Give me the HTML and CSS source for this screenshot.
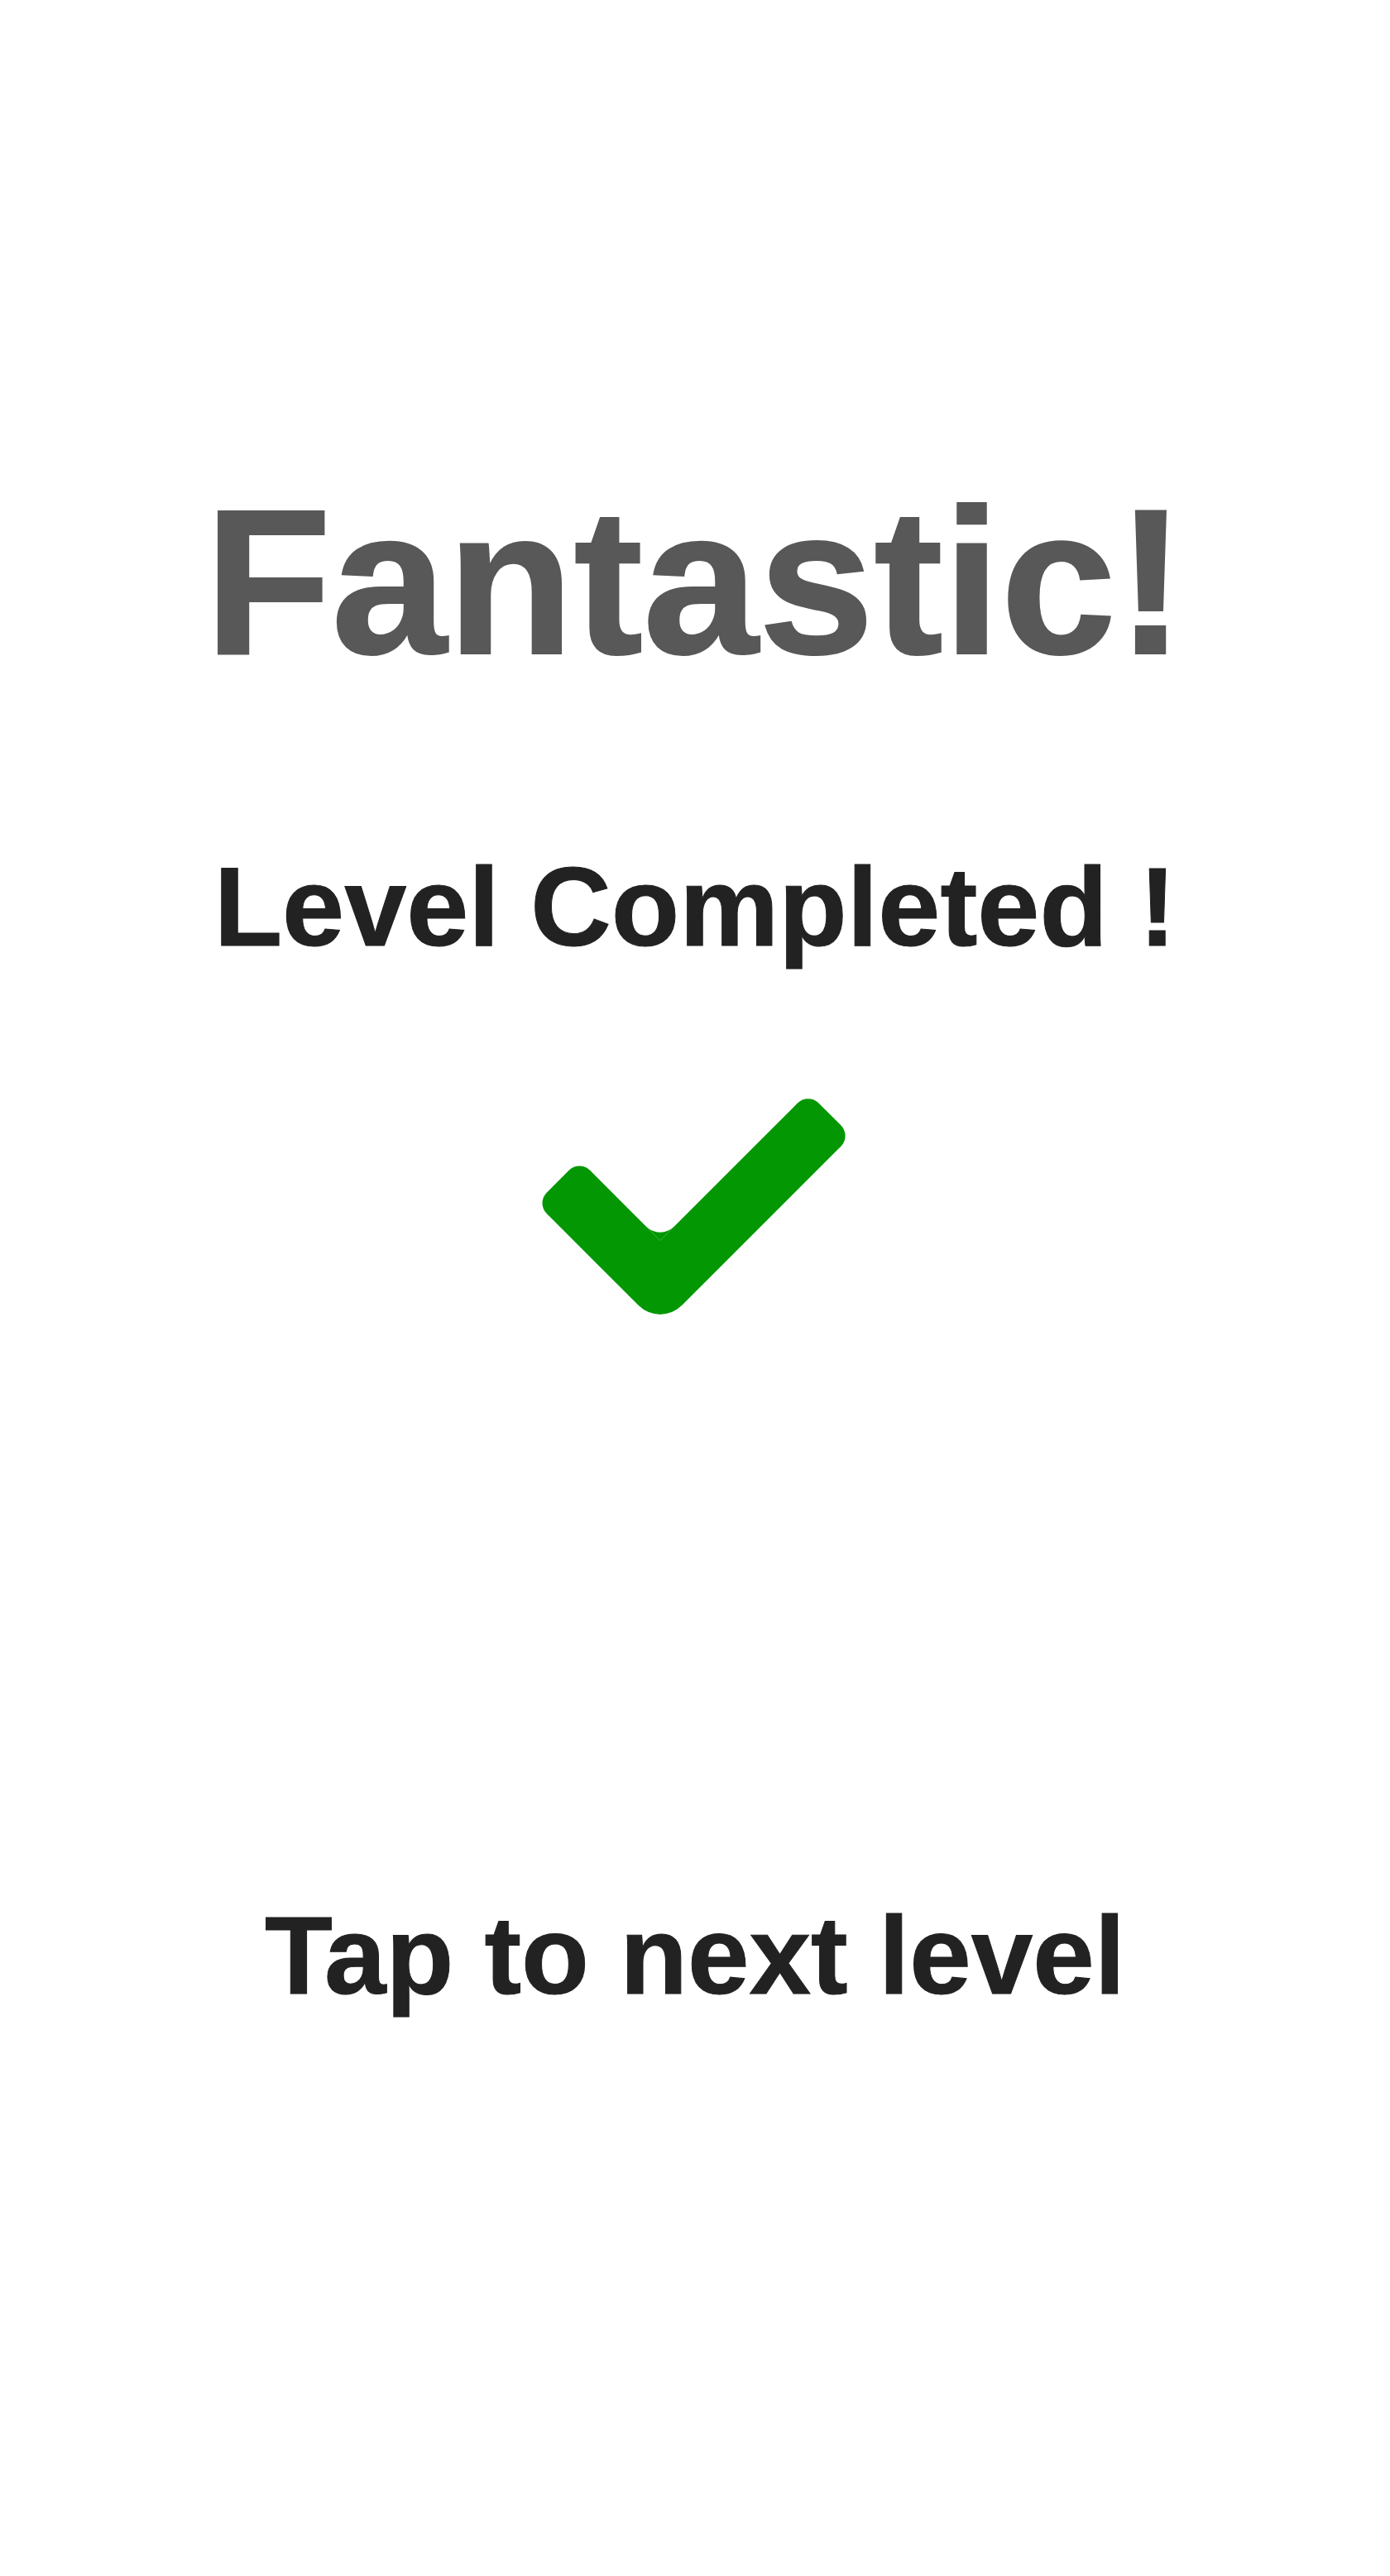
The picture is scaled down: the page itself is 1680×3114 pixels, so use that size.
FILE: index.html
```html
<!DOCTYPE html>
<html lang="en">
<head>
<meta charset="utf-8">
<title>Level Completed</title>
<link rel="stylesheet" href="styles.css">
</head>
<body>
<main class="screen">
  <h1 class="title">Fantastic!</h1>
  <h2 class="subtitle">Level Completed !</h2>
  <svg class="check" width="380" height="272" viewBox="0 0 380 272" aria-hidden="true">
    <path d="M36.93 121.93 L147.9 232.9 L340.17 40.63" fill="none" stroke="#039703" stroke-width="74" stroke-linejoin="round" stroke-linecap="butt"/>
    <g fill="#039703">
      <rect x="0" y="-37" width="36" height="74" rx="18" transform="translate(24.2,109.2) rotate(45)"/>
      <rect x="-36" y="-37" width="36" height="74" rx="18" transform="translate(352.9,27.9) rotate(-45)"/>
      <path d="M130.9 163.6 L147.9 180.6 L164.9 163.6 A24 24 0 0 1 130.9 163.6 Z"/>
    </g>
  </svg>
  <p class="tap">Tap to next level</p>
</main>
</body>
</html>
```

FILE: styles.css
```css
html, body {
  margin: 0;
  padding: 0;
  background: #ffffff;
}

.screen {
  display: flex;
  flex-direction: column;
  align-items: center;
  width: 1680px;
  min-height: 3114px;
  padding-top: 578px;
  box-sizing: border-box;
  font-family: "Liberation Sans", Arial, sans-serif;
  font-weight: bold;
}

.title {
  margin: 0;
  font-size: 251px;
  line-height: 251px;
  color: #585858;
  font-weight: bold;
  -webkit-text-stroke: 2px #585858;
}

.subtitle {
  margin: 200px 0 0;
  font-size: 135px;
  line-height: 135px;
  color: #222222;
  font-weight: bold;
  -webkit-text-stroke: 1px #222222;
}

.check {
  display: block;
  margin-top: 155px;
}

.tap {
  margin: 706px 0 0;
  font-size: 134px;
  line-height: 134px;
  color: #222222;
  -webkit-text-stroke: 1px #222222;
}
```
